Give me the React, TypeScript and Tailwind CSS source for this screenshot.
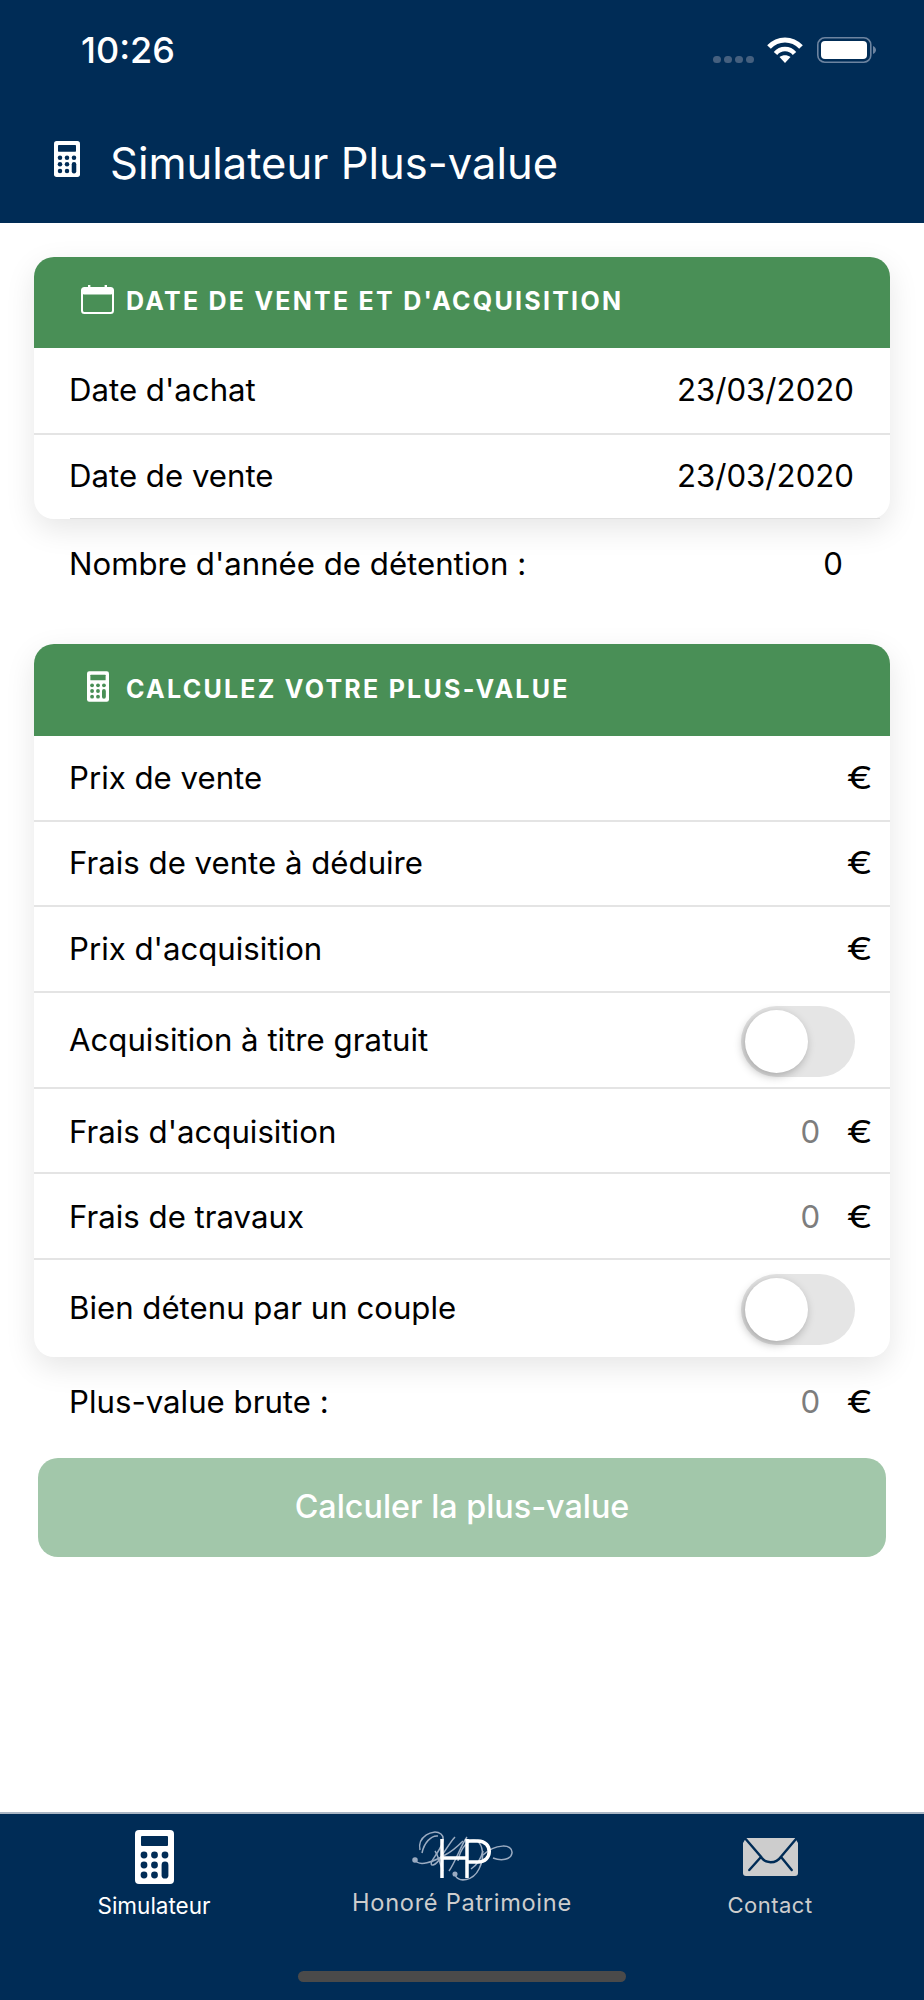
import React from 'react'

function CalculatorIcon({ className = '', fg = '#002c56' }: { className?: string; fg?: string }) {
  const dots = [
    [9, 25],
    [19.5, 25],
    [30, 25],
    [9, 35],
    [19.5, 35],
    [9, 45],
    [19.5, 45],
  ]
  return (
    <svg className={className} viewBox="0 0 39 54">
      <rect width="39" height="54" rx="4" fill="white" />
      <rect x="6" y="6" width="27" height="10" rx="1" fill={fg} />
      {dots.map(([cx, cy]) => (
        <circle key={`${cx}-${cy}`} cx={cx} cy={cy} r="3.4" fill={fg} />
      ))}
      <rect x="26.6" y="31.6" width="6.8" height="17" rx="3.4" fill={fg} />
    </svg>
  )
}

function CalendarIcon({ className = '' }: { className?: string }) {
  return (
    <svg className={className} viewBox="0 0 33 29" fill="none">
      <rect x="1" y="3" width="31" height="25" rx="2.5" stroke="white" strokeWidth="2" />
      <rect x="1" y="3" width="31" height="6.5" rx="2" fill="white" />
      <rect x="7" y="0" width="2.4" height="4" fill="white" />
      <rect x="23.6" y="0" width="2.4" height="4" fill="white" />
    </svg>
  )
}

function EnvelopeIcon({ className = '' }: { className?: string }) {
  return (
    <svg className={className} viewBox="0 0 55 38">
      <path d="M3 0 H52 L55 5 V35 Q55 38 52 38 H3 Q0 38 0 35 V5 Z" fill="#cdcdcd" />
      <path
        d="M2.7 1 L18 18.7 C22 26 33 26 38 18.7 L53 1"
        fill="none"
        stroke="#002c56"
        strokeWidth="2.4"
        strokeLinecap="round"
      />
      <path d="M6.3 32 L17.3 19.7 M48.7 32 L38.7 19.7" fill="none" stroke="#002c56" strokeWidth="2.4" strokeLinecap="round" />
    </svg>
  )
}

function LogoIcon({ className = '' }: { className?: string }) {
  return (
    <svg className={className} viewBox="0 0 115 62" fill="none">
      <g stroke="#9bacc2" strokeWidth="1.5">
        <path d="M15 25 C12 12 28 3 36 9 C43 15 31 29 27 36 C24 42 30 42 36 32 C40 26 46 16 50 12" />
        <path d="M17 28 C19 18 26 10 33 11" />
        <path d="M10 35 C14 42 28 37 40 30 C48 26 54 20 58 16" />
        <path d="M30 26 C34 32 35 40 38 46" />
        <path d="M78 30 C90 19 108 18 107 28 C106 35 96 36 88 33" />
        <path d="M50 50 C54 58 68 56 74 44 C80 32 78 20 72 16 C64 12 55 24 53 36" />
        <path d="M62 12 C56 20 50 38 44 46" />
        <path d="M66 44 C72 40 76 34 78 26" />
        <circle cx="10" cy="35" r="2" fill="#9bacc2" />
        <circle cx="50" cy="49" r="1.8" fill="#9bacc2" />
      </g>
      <path d="M37 14 V53 M62 14 V53 M37 33 H62 M62 16 H73 C88 16 88 37 73 37 H62" stroke="white" strokeWidth="3.5" />
    </svg>
  )
}

function StatusIcons() {
  return (
    <div className="flex items-start">
      <div className="mt-[19px] flex gap-[3px]">
        {[0, 1, 2, 3].map((i) => (
          <span key={i} className="h-[7px] w-[8px] rounded-full bg-[#45607f]" />
        ))}
      </div>
      <svg className="ml-[13px] h-[26px] w-[36px]" viewBox="0 0 36 26" fill="none">
        <path d="M2 10 C11 0.5 25 0.5 34 10" stroke="white" strokeWidth="5" />
        <path d="M8.5 16.5 C13.5 10.5 22.5 10.5 27.5 16.5" stroke="white" strokeWidth="4.5" />
        <path d="M12.5 20 L18 26 L23.5 20 C20 17.5 16 17.5 12.5 20 Z" fill="white" />
      </svg>
      <svg className="ml-[14px] h-[26px] w-[59px]" viewBox="0 0 59 26" fill="none">
        <rect x="0.8" y="0.8" width="53" height="24.4" rx="7" stroke="#6d84a0" strokeWidth="1.6" />
        <rect x="4" y="4" width="46" height="18" rx="4" fill="white" />
        <path d="M56 9 C58 10 59 11.5 59 13 C59 14.5 58 16 56 17 Z" fill="#6d84a0" />
      </svg>
    </div>
  )
}

function Toggle({ last }: { last?: boolean }) {
  return (
    <div className={`relative h-[71px] w-[114px] rounded-full bg-[#e5e5e5] ${last ? 'mt-[1px]' : 'mt-[3px]'}`}>
      <span className="absolute top-[4px] left-[4px] h-[63px] w-[63px] rounded-full bg-white shadow-[-2px_3px_10px_rgba(0,0,0,0.28)]" />
    </div>
  )
}

function Euro() {
  return <span className="mr-[17px] origin-right scale-x-125">€</span>
}

interface RowProps {
  label: string
  height: string
  value?: string
  muted?: boolean
  euro?: boolean
  toggle?: boolean
  last?: boolean
}

function Row({ label, height, value, muted, euro, toggle, last }: RowProps) {
  return (
    <div className={`flex items-center pl-[35px] ${height} ${last ? '' : 'border-b-2 border-[#e4e4e4]'} ${muted ? 'pt-[3px]' : ''}`}>
      <span className="flex-1">{label}</span>
      {value && !euro && <span className="mr-[36px]">{value}</span>}
      {value && euro && <span className={`mr-[32px] ${muted ? 'text-[#7d7d7d]' : ''}`}>{value}</span>}
      {euro && <Euro />}
      {toggle && <div className="mr-[35px]"><Toggle last={last} /></div>}
    </div>
  )
}

function SectionHeader({ icon, title, height }: { icon: React.ReactNode; title: string; height: string }) {
  return (
    <div className={`flex items-center rounded-t-[20px] bg-[#498f56] pb-[2px] text-[25px] leading-none font-bold tracking-[2.25px] text-white ${height}`}>
      <div className="flex w-[92px] justify-end pr-[12px]">{icon}</div>
      {title}
    </div>
  )
}

export default function App() {
  return (
    <div className="flex h-[2000px] w-[924px] flex-col bg-white text-[31.2px] text-black [font-family:Inter,sans-serif]">
      <header className="h-[223px] bg-[#002c56] text-white">
        <div className="flex justify-between pt-[37px] pr-[48px] pl-[81px]">
          <span className="text-[36px] leading-[26px] font-medium">10:26</span>
          <StatusIcons />
        </div>
        <div className="mt-[78px] flex items-center pl-[54px]">
          <CalculatorIcon className="-mt-[8px] h-[36px] w-[26px]" />
          <h1 className="ml-[30px] text-[43.5px] leading-[44px]">Simulateur Plus-value</h1>
        </div>
      </header>

      <main className="flex-1 px-[34px] pt-[34px]">
        <section className="rounded-[20px] bg-white shadow-[0_10px_30px_rgba(0,0,0,0.1)]">
          <SectionHeader
            height="h-[91px]"
            icon={<CalendarIcon className="-mt-[5px] h-[29px] w-[33px]" />}
            title="DATE DE VENTE ET D'ACQUISITION"
          />
          <Row label="Date d'achat" value="23/03/2020" height="h-[87px]" />
          <Row label="Date de vente" value="23/03/2020" height="h-[83px]" last />
          <div className="mr-[10px] ml-[36px] h-[1px] bg-[#e0e0e0]" />
        </section>

        <div className="flex h-[92px] items-center pb-[2px] pl-[35px]">
          <span className="flex-1">Nombre d'année de détention :</span>
          <span className="mr-[47px]">0</span>
        </div>

        <section className="mt-[33px] rounded-[20px] bg-white shadow-[0_10px_30px_rgba(0,0,0,0.1)]">
          <SectionHeader
            height="h-[92px]"
            icon={<CalculatorIcon className="-mt-[6px] mr-[5px] h-[33px] w-[22px]" fg="#498f56" />}
            title="CALCULEZ VOTRE PLUS-VALUE"
          />
          <Row label="Prix de vente" euro height="h-[86px]" />
          <Row label="Frais de vente à déduire" euro height="h-[85px]" />
          <Row label="Prix d'acquisition" euro height="h-[86px]" />
          <Row label="Acquisition à titre gratuit" toggle height="h-[96px]" />
          <Row label="Frais d'acquisition" value="0" muted euro height="h-[85px]" />
          <Row label="Frais de travaux" value="0" muted euro height="h-[86px]" />
          <Row label="Bien détenu par un couple" toggle height="h-[97px]" last />
        </section>

        <div className="flex h-[90px] items-center pl-[35px]">
          <span className="flex-1">Plus-value brute :</span>
          <span className="mr-[32px] text-[#7d7d7d]">0</span>
          <Euro />
        </div>

        <button className="mt-[11px] ml-[4px] h-[99px] w-[848px] rounded-[20px] bg-[#a2c7aa] text-[32.3px] font-medium text-white">
          Calculer la plus-value
        </button>
      </main>

      <footer className="relative h-[188px] border-t-2 border-[#aab6c4] bg-[#002c56]">
        <nav className="grid grid-cols-3">
          <div className="flex flex-col items-center pt-[16px] text-[22.5px] leading-[24px] text-white">
            <CalculatorIcon className="h-[54px] w-[39px]" />
            <span className="mt-[10px]">Simulateur</span>
          </div>
          <div className="flex flex-col items-center pt-[11px] text-[23.6px] leading-[26px] tracking-[0.7px] text-[#cdcdcd]">
            <LogoIcon className="h-[62px] w-[115px]" />
            <span className="mt-[3px]">Honoré Patrimoine</span>
          </div>
          <div className="flex flex-col items-center pt-[24px] text-[22px] leading-[24px] tracking-[0.5px] text-[#cdcdcd]">
            <EnvelopeIcon className="h-[38px] w-[55px]" />
            <span className="mt-[17px]">Contact</span>
          </div>
        </nav>
        <div className="absolute bottom-[18px] left-[298px] h-[11px] w-[328px] rounded-full bg-[#4a4a4a]" />
      </footer>
    </div>
  )
}
